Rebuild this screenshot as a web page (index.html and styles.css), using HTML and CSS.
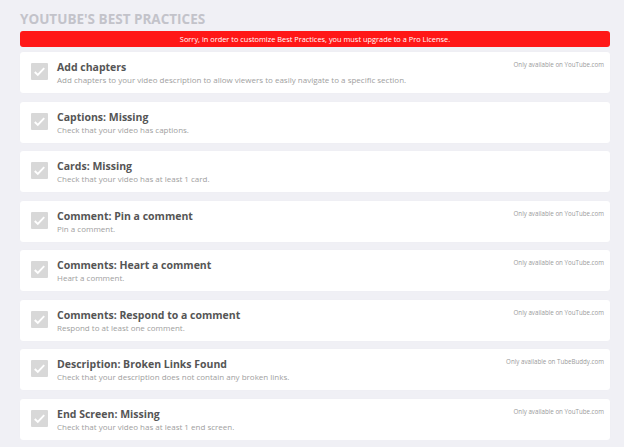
FILE: index.html
```html
<!DOCTYPE html>
<html lang="en">
<head>
  <meta charset="UTF-8">
  <title>YouTube's Best Practices</title>
  <link rel="stylesheet" href="styles.css">
</head>
<body>
  <div id="page">
    <h1 class="title">YOUTUBE'S BEST PRACTICES</h1>
    <div class="alert">Sorry, in order to customize Best Practices, you must upgrade to a Pro License.</div>

    <div class="card">
      <span class="check"><svg viewBox="0 0 18 18"><path d="M4 9.5l3.2 3.2L14 5.5"/></svg></span>
      <div class="info">
        <div class="name">Add chapters</div>
        <div class="desc">Add chapters to your video description to allow viewers to easily navigate to a specific section.</div>
      </div>
      <div class="note">Only available on YouTube.com</div>
    </div>

    <div class="card">
      <span class="check"><svg viewBox="0 0 18 18"><path d="M4 9.5l3.2 3.2L14 5.5"/></svg></span>
      <div class="info">
        <div class="name">Captions: Missing</div>
        <div class="desc">Check that your video has captions.</div>
      </div>
    </div>

    <div class="card">
      <span class="check"><svg viewBox="0 0 18 18"><path d="M4 9.5l3.2 3.2L14 5.5"/></svg></span>
      <div class="info">
        <div class="name">Cards: Missing</div>
        <div class="desc">Check that your video has at least 1 card.</div>
      </div>
    </div>

    <div class="card">
      <span class="check"><svg viewBox="0 0 18 18"><path d="M4 9.5l3.2 3.2L14 5.5"/></svg></span>
      <div class="info">
        <div class="name">Comment: Pin a comment</div>
        <div class="desc">Pin a comment.</div>
      </div>
      <div class="note">Only available on YouTube.com</div>
    </div>

    <div class="card">
      <span class="check"><svg viewBox="0 0 18 18"><path d="M4 9.5l3.2 3.2L14 5.5"/></svg></span>
      <div class="info">
        <div class="name">Comments: Heart a comment</div>
        <div class="desc">Heart a comment.</div>
      </div>
      <div class="note">Only available on YouTube.com</div>
    </div>

    <div class="card">
      <span class="check"><svg viewBox="0 0 18 18"><path d="M4 9.5l3.2 3.2L14 5.5"/></svg></span>
      <div class="info">
        <div class="name">Comments: Respond to a comment</div>
        <div class="desc">Respond to at least one comment.</div>
      </div>
      <div class="note">Only available on YouTube.com</div>
    </div>

    <div class="card">
      <span class="check"><svg viewBox="0 0 18 18"><path d="M4 9.5l3.2 3.2L14 5.5"/></svg></span>
      <div class="info">
        <div class="name">Description: Broken Links Found</div>
        <div class="desc">Check that your description does not contain any broken links.</div>
      </div>
      <div class="note">Only available on TubeBuddy.com</div>
    </div>

    <div class="card">
      <span class="check"><svg viewBox="0 0 18 18"><path d="M4 9.5l3.2 3.2L14 5.5"/></svg></span>
      <div class="info">
        <div class="name">End Screen: Missing</div>
        <div class="desc">Check that your video has at least 1 end screen.</div>
      </div>
      <div class="note">Only available on YouTube.com</div>
    </div>
  </div>
</body>
</html>
```

FILE: styles.css
```css
body {
  margin: 0;
  padding: 0;
  background: #f0f0f5;
  font-family: "Open Sans", "Liberation Sans", sans-serif;
  overflow: hidden;
}

#page {
  padding: 9px 14px 0 20px;
}

.title {
  margin: 0;
  font-size: 13.5px;
  line-height: 20px;
  font-weight: 700;
  color: #c3c3ca;
}

.alert {
  margin-top: 2px;
  height: 16px;
  line-height: 16px;
  background: #ff1717;
  border-radius: 3px;
  color: #fff;
  font-size: 7.4px;
  text-align: center;
}

.card {
  display: flex;
  align-items: flex-start;
  height: 41px;
  margin-top: 8.5px;
  padding: 0 6px 0 11px;
  box-sizing: border-box;
  background: #fff;
  border-radius: 3px;
  box-shadow: 0 0 1px rgba(0, 0, 0, 0.04);
}

.alert + .card {
  margin-top: 5px;
}

.check {
  width: 17px;
  height: 17px;
  margin-top: 11px;
  background: #d8d8d8;
  border-radius: 1px;
  flex: none;
}

.check svg {
  display: block;
  width: 17px;
  height: 17px;
  fill: none;
  stroke: #fff;
  stroke-width: 2;
}

.info {
  flex: 1;
  margin-left: 9px;
  padding-top: 8px;
}

.name {
  font-size: 10.5px;
  line-height: 14px;
  font-weight: 700;
  color: #555;
}

.desc {
  font-size: 8px;
  line-height: 12px;
  color: #a0a0a0;
}

.note {
  margin-top: 8px;
  font-size: 6.2px;
  color: #9a9a9a;
}
```
